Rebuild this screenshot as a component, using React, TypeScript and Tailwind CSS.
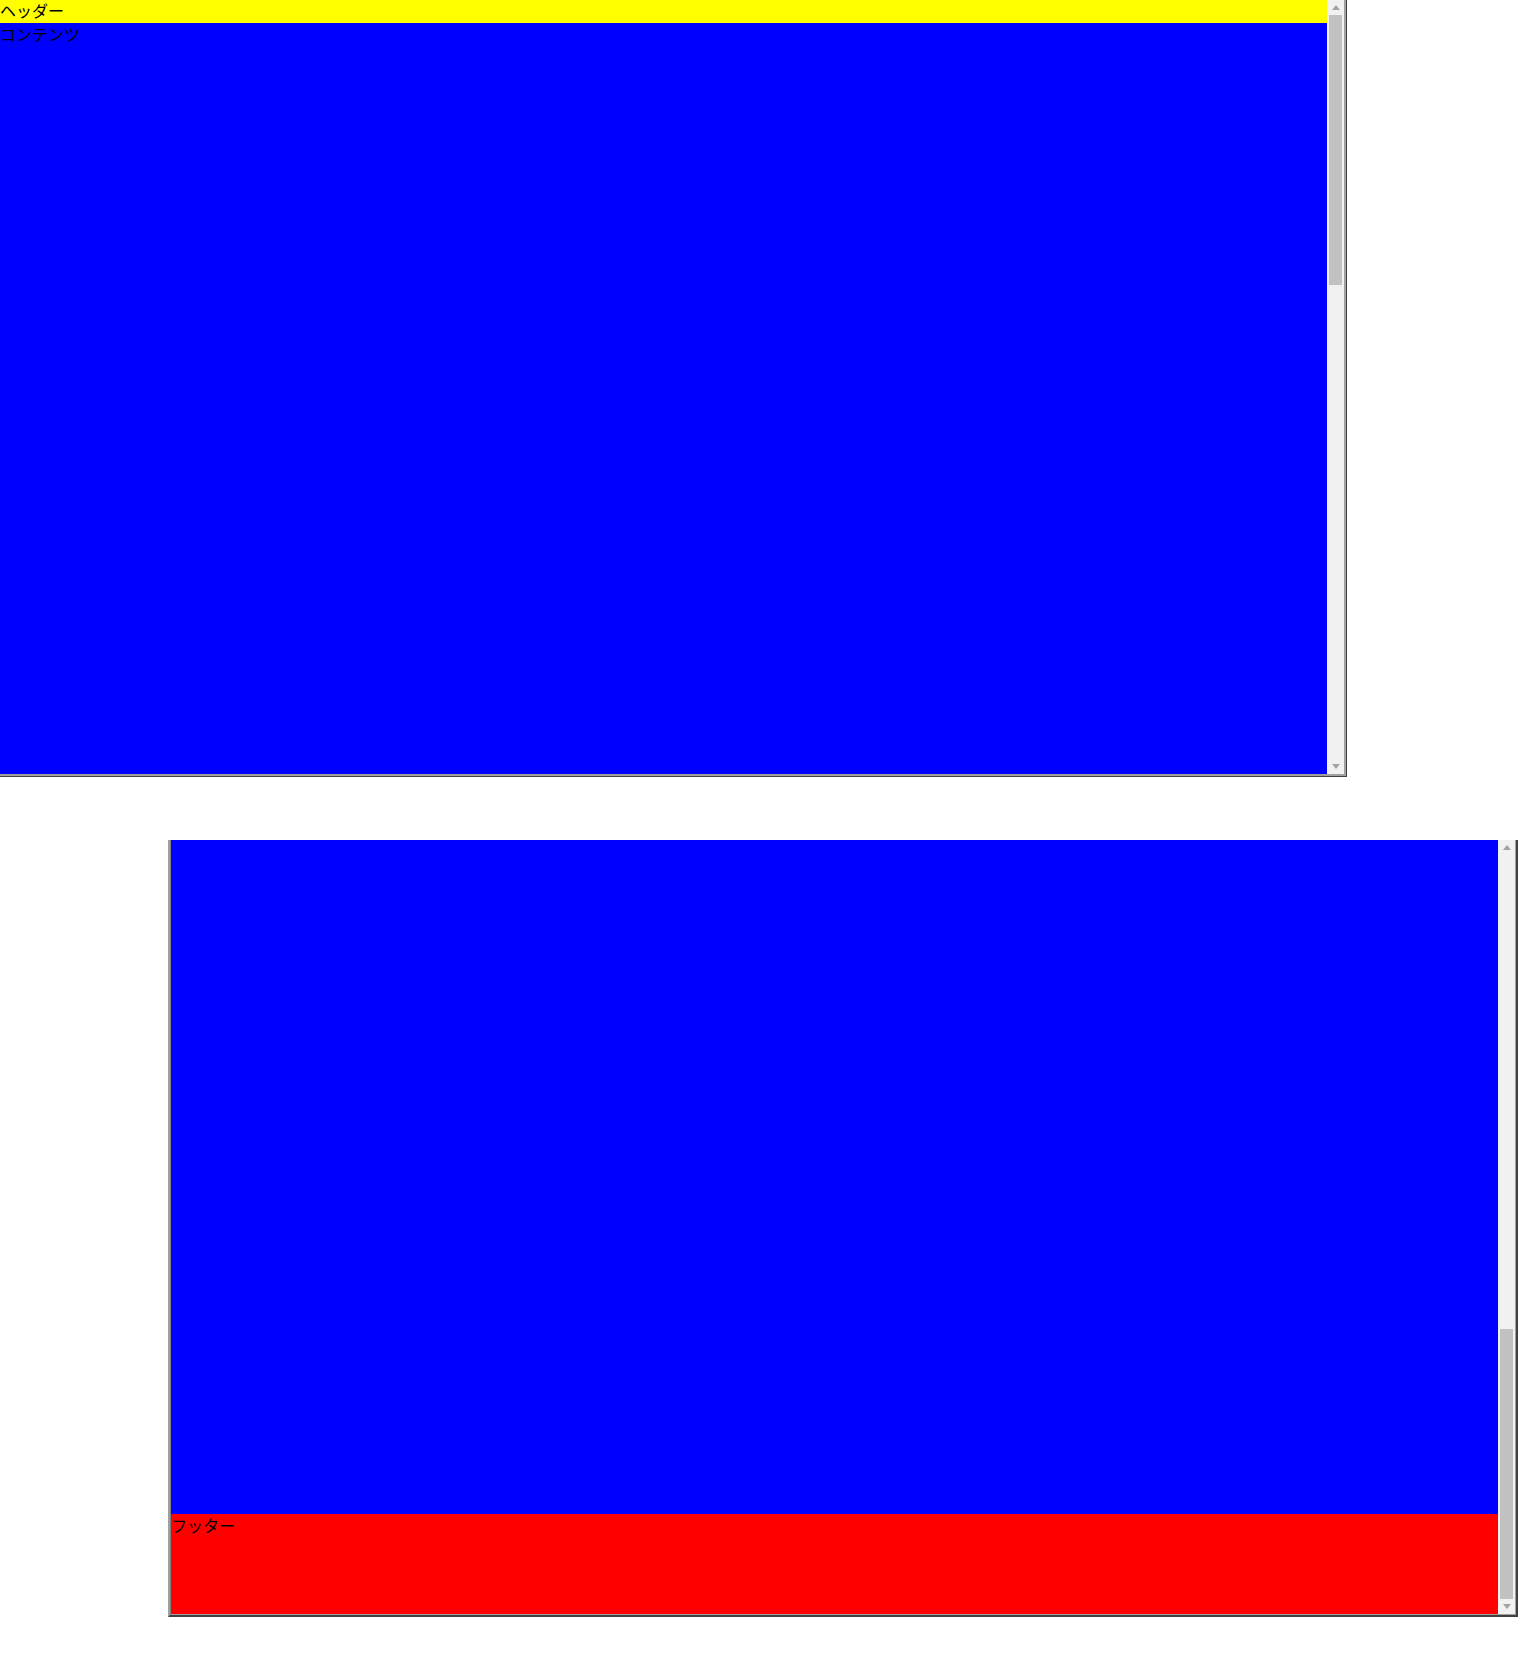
import React, { useEffect, useRef } from 'react';

const font = { fontFamily: '"Noto Sans CJK JP", "Noto Sans", sans-serif' };

const Arrow: React.FC<{ up?: boolean }> = ({ up }) => (
  <div className="h-[15px] flex items-center justify-center shrink-0">
    <svg width="8" height="5" viewBox="0 0 8 5">
      {up ? <polygon points="0,5 8,5 4,0" fill="#a3a3a3" /> : <polygon points="0,0 8,0 4,5" fill="#a3a3a3" />}
    </svg>
  </div>
);

// classic scrollbar look; the headless browser uses overlay ones
const Scrollbar: React.FC<{ atEnd?: boolean }> = ({ atEnd }) => (
  <div className="w-[17px] shrink-0 bg-[#f1f1f1] flex flex-col">
    <Arrow up />
    <div className={`flex-1 flex flex-col px-[2px] ${atEnd ? 'justify-end' : 'justify-start'}`}>
      <div className="h-[270px] bg-[#c1c1c1]" />
    </div>
    <Arrow />
  </div>
);

const Page: React.FC = () => (
  <div className="text-black text-[16px] leading-[23px]" style={font}>
    <div className="bg-[#ffff00] leading-[21px] pb-[2px]">ヘッダー</div>
    <div className="bg-[#0000ff] h-[2010px]">コンテンツ</div>
    <div className="bg-[#ff0000] h-[100px]">フッター</div>
  </div>
);

export default function App() {
  const bottomRef = useRef<HTMLDivElement>(null);

  useEffect(() => {
    // second frame shows the end of the page
    if (bottomRef.current) {
      bottomRef.current.scrollTop = bottomRef.current.scrollHeight;
    }
  }, []);

  return (
    <div className="bg-white w-[1536px] h-[1672px] flex flex-col">
      <div className="w-[1347px] border-r border-b border-[#404040]">
        <div className="h-[776px] flex border-r-2 border-b-2 border-[#a0a0a0]">
          <div className="flex-1 overflow-hidden">
            <Page />
          </div>
          <Scrollbar />
        </div>
      </div>

      <div className="ml-[168px] mt-[63px] w-[1350px] border-x-2 border-b-2 border-l-[#a0a0a0] border-r-[#404040] border-b-[#404040]">
        <div className="h-[775px] flex border-l border-r border-b border-l-[#808080] border-r-[#a0a0a0] border-b-[#a0a0a0]">
          <div ref={bottomRef} className="flex-1 overflow-hidden">
            <Page />
          </div>
          <Scrollbar atEnd />
        </div>
      </div>
    </div>
  );
}
